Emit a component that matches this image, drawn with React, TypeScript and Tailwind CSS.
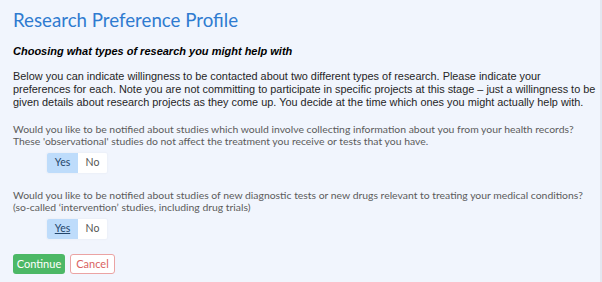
export default function App() {
  return (
    <div className="w-[602px] h-[282px] bg-[#f1f5fd] border-r-2 border-[#e3e7f0] overflow-hidden">
      <div className="pl-[13px] pr-2 pt-[6px]">
        <h1 className="text-[18.7px] leading-[28px] text-[#2f7bd0] font-['Lato',sans-serif]">
          Research Preference Profile
        </h1>

        <p className="mt-[10px] text-[11px] leading-[14px] font-bold italic text-black font-['Liberation_Sans',sans-serif]">
          Choosing what types of research you might help with
        </p>

        <p className="mt-[12px] whitespace-nowrap text-[10.9px] leading-[13px] text-[#262626] font-['Liberation_Sans',sans-serif]">
          Below you can indicate willingness to be contacted about two different types of research. Please indicate your
          <br />
          preferences for each. Note you are not committing to participate in specific projects at this stage – just a willingness to be
          <br />
          given details about research projects as they come up. You decide at the time which ones you might actually help with.
        </p>

        <Question
          lines={[
            "Would you like to be notified about studies which would involve collecting information about you from your health records?",
            "These 'observational' studies do not affect the treatment you receive or tests that you have.",
          ]}
          underline={false}
          className="mt-[14px]"
        />

        <Question
          lines={[
            "Would you like to be notified about studies of new diagnostic tests or new drugs relevant to treating your medical conditions?",
            "(so-called ‘intervention’ studies, including drug trials)",
          ]}
          underline
          className="mt-[16px]"
        />

        <div className="mt-[15px] flex gap-[5px] font-['Lato',sans-serif] text-[11px]">
          <button className="w-[52px] h-[20px] rounded-[3px] bg-[#4cb866] text-white">Continue</button>
          <button className="w-[45px] h-[20px] rounded-[3px] bg-white border border-[#eba3a3] text-[#d9625f]">
            Cancel
          </button>
        </div>
      </div>
    </div>
  );
}

function Question({
  lines,
  underline,
  className,
}: {
  lines: string[];
  underline: boolean;
  className: string;
}) {
  return (
    <div className={className}>
      <p className="whitespace-nowrap text-[10.4px] leading-[12px] text-[#5b5b5b] font-['Lato',sans-serif]">
        {lines[0]}
        <br />
        {lines[1]}
      </p>
      <div className="mt-[6px] ml-[34px] flex w-fit font-['Lato',sans-serif] text-[10.5px] shadow-[0_0_2px_rgba(0,0,0,0.06)]">
        <span
          className={`w-[31px] h-[20px] flex items-center justify-center bg-[#bedcfb] text-[#24456b] rounded-l-[2px] ${
            underline ? "underline" : ""
          }`}
        >
          Yes
        </span>
        <span className="w-[29px] h-[20px] flex items-center justify-center bg-white text-[#555] rounded-r-[2px]">
          No
        </span>
      </div>
    </div>
  );
}
